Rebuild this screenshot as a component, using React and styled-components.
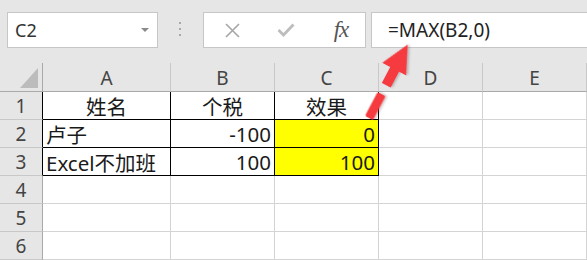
import React from "react";
import styled, { createGlobalStyle } from "styled-components";

const GlobalStyle = createGlobalStyle`
  html, body {
    margin: 0;
    padding: 0;
    background: #ffffff;
  }
  body {
    font-family: "Noto Sans", "Noto Sans CJK SC", sans-serif;
    overflow: hidden;
  }
`;

const Page = styled.div`
  position: relative;
  width: 587px;
  height: 260px;
  overflow: hidden;
`;

const FormulaBar = styled.div`
  display: flex;
  align-items: flex-start;
  height: 63px;
  padding: 12px 0 0 7px;
  box-sizing: border-box;
  background: #e6e6e6;
`;

const NameBox = styled.div`
  display: flex;
  align-items: center;
  justify-content: space-between;
  width: 151px;
  height: 36px;
  box-sizing: border-box;
  padding: 0 8px 0 7px;
  background: #fff;
  border: 1px solid #c6c6c6;
  font-size: 18px;
  color: #333;
`;

const Caret = styled.span`
  width: 0;
  height: 0;
  border-left: 4px solid transparent;
  border-right: 4px solid transparent;
  border-top: 4px solid #8a8a8a;
`;

const Grip = styled.div`
  display: flex;
  flex-direction: column;
  gap: 4px;
  margin: 10px 22px 0 21px;
  span {
    width: 2px;
    height: 2px;
    background: #a8a8a8;
  }
`;

const ButtonBox = styled.div`
  display: flex;
  align-items: center;
  width: 163px;
  height: 36px;
  box-sizing: border-box;
  background: #fff;
  border: 1px solid #c6c6c6;
  padding-left: 20px;
`;

const IconSlot = styled.div`
  display: flex;
  align-items: center;
  justify-content: center;
  width: ${(p) => p.$w}px;
`;

const Fx = styled.span`
  font-family: "Liberation Serif", serif;
  font-style: italic;
  font-size: 23px;
  color: #555;
  letter-spacing: -1px;
`;

const FormulaInput = styled.div`
  flex: 1;
  height: 36px;
  margin-left: 5px;
  margin-right: -10px;
  box-sizing: border-box;
  background: #fff;
  border: 1px solid #c6c6c6;
  padding: 2px 0 0 16px;
  font-size: 19px;
  line-height: 30px;
  color: #222;
`;

const Grid = styled.div`
  display: grid;
  grid-template-columns: 43px 128px 104px 104px 104px 104px;
  grid-template-rows: 29px repeat(6, 28px);
`;

const ColHead = styled.div`
  background: #e6e6e6;
  border-right: 1px solid #c8c8c8;
  border-bottom: 1px solid #a9a9a9;
  display: flex;
  align-items: center;
  justify-content: center;
  font-size: 19px;
  color: #444;
  padding-top: 2px;
  box-sizing: border-box;
`;

const Corner = styled(ColHead)`
  position: relative;
  border-right: 1px solid #a9a9a9;
  &::after {
    content: "";
    position: absolute;
    right: 4px;
    bottom: 3px;
    width: 0;
    height: 0;
    border-left: 18px solid transparent;
    border-bottom: 20px solid #bcbcbc;
  }
`;

const RowHead = styled.div`
  background: #e6e6e6;
  border-right: 1px solid ${(p) => (p.$edge ? "#000" : "#a9a9a9")};
  border-bottom: 1px solid #c8c8c8;
  display: flex;
  align-items: center;
  justify-content: center;
  font-size: 19px;
  color: #444;
  box-sizing: border-box;
  padding-top: 1px;
`;

const Cell = styled.div`
  box-sizing: border-box;
  border-right: 1px solid ${(p) => (p.$boxed ? "#000" : "#d4d4d4")};
  border-bottom: 1px solid ${(p) => (p.$boxed ? "#000" : "#d4d4d4")};
  background: ${(p) => (p.$fill ? "#ffff00" : "#fff")};
  display: flex;
  align-items: center;
  justify-content: ${(p) =>
    p.$align === "right" ? "flex-end" : p.$align === "center" ? "center" : "flex-start"};
  padding: 1px 3px 0 3px;
  font-size: 20.5px;
  color: #1a1a1a;
  white-space: nowrap;
  overflow: hidden;
`;

const Overlay = styled.svg`
  position: absolute;
  left: 0;
  top: 0;
  pointer-events: none;
`;

const cols = ["A", "B", "C", "D", "E"];

const data = [
  [
    { v: "姓名", a: "center" },
    { v: "个税", a: "center" },
    { v: "效果", a: "center" },
  ],
  [
    { v: "卢子", a: "left" },
    { v: "-100", a: "right" },
    { v: "0", a: "right", fill: true },
  ],
  [
    { v: "Excel不加班", a: "left" },
    { v: "100", a: "right" },
    { v: "100", a: "right", fill: true },
  ],
];

function Arrow() {
  return (
    <Overlay width="587" height="260" viewBox="0 0 587 260">
      <defs>
        <filter id="sh" x="-20%" y="-20%" width="140%" height="140%">
          <feDropShadow dx="1" dy="1.5" stdDeviation="1.2" floodColor="#000" floodOpacity="0.25" />
        </filter>
      </defs>
      <g transform="translate(369 118) rotate(-62.2)" fill="#f53b3f" filter="url(#sh)">
        <rect x="0" y="-4.5" width="27" height="9" rx="1.5" />
        <rect x="37" y="-5" width="21" height="10" />
        <polygon points="55,-14 83,0 55,13" />
      </g>
    </Overlay>
  );
}

export default function App() {
  return (
    <Page>
      <GlobalStyle />
      <FormulaBar>
        <NameBox>
          <span>C2</span>
          <Caret />
        </NameBox>
        <Grip>
          <span />
          <span />
          <span />
        </Grip>
        <ButtonBox>
          <IconSlot $w={16}>
            <svg width="15" height="15" viewBox="0 0 15 15">
              <path d="M1 1 L14 14 M14 1 L1 14" stroke="#a6a6a6" strokeWidth="1.6" fill="none" />
            </svg>
          </IconSlot>
          <IconSlot $w={92}>
            <svg width="18" height="14" viewBox="0 0 18 14">
              <path d="M1.5 7 L6.5 12 L16.5 1.5" stroke="#bdbdbd" strokeWidth="2.8" fill="none" />
            </svg>
          </IconSlot>
          <IconSlot $w={18}>
            <Fx>fx</Fx>
          </IconSlot>
        </ButtonBox>
        <FormulaInput>=MAX(B2,0)</FormulaInput>
      </FormulaBar>
      <Grid>
        <Corner />
        {cols.map((c) => (
          <ColHead key={c}>{c}</ColHead>
        ))}
        {[1, 2, 3, 4, 5, 6].map((r) => {
          const row = data[r - 1];
          return (
            <React.Fragment key={r}>
              <RowHead $edge={r <= 3}>{r}</RowHead>
              {cols.map((c, ci) => {
                const cell = row && row[ci];
                return (
                  <Cell
                    key={c}
                    $boxed={!!cell}
                    $fill={cell && cell.fill}
                    $align={cell ? cell.a : "left"}
                  >
                    {cell ? cell.v : ""}
                  </Cell>
                );
              })}
            </React.Fragment>
          );
        })}
      </Grid>
      <Arrow />
    </Page>
  );
}
